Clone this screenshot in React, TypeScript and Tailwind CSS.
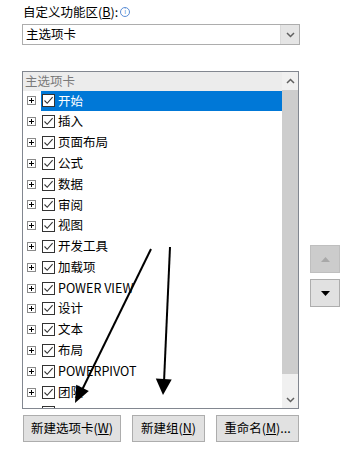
const tabs = [
  '开始',
  '插入',
  '页面布局',
  '公式',
  '数据',
  '审阅',
  '视图',
  '开发工具',
  '加载项',
  'POWER VIEW',
  '设计',
  '文本',
  '布局',
  'POWERPIVOT',
  '团队',
  ''
];

function PlusBox() {
  return (
    <div className="relative h-[9px] w-[9px] shrink-0 border border-[#8a8a8a] bg-white">
      <div className="absolute left-[1px] top-[3px] h-[1px] w-[5px] bg-black" />
      <div className="absolute left-[3px] top-[1px] h-[5px] w-[1px] bg-black" />
    </div>
  );
}

function CheckBox() {
  return (
    <div className="flex h-[13px] w-[13px] shrink-0 items-center justify-center border border-[#333333] bg-white">
      <svg width="11" height="11" viewBox="0 0 11 11">
        <path d="M1.5 5.5 L4.2 8.3 L9.6 2.2" fill="none" stroke="#333333" strokeWidth="1.1" />
      </svg>
    </div>
  );
}

function Chevron({ up }: { up?: boolean }) {
  return (
    <svg width="9" height="6" viewBox="0 0 9 6">
      <path
        d={up ? 'M1 5 L4.5 1.5 L8 5' : 'M1 1 L4.5 4.5 L8 1'}
        fill="none"
        stroke="#606060"
        strokeWidth="1.5"
      />
    </svg>
  );
}

export default function App() {
  return (
    <div
      className="relative h-[449px] w-[345px] overflow-hidden bg-white text-[12.5px] text-black"
      style={{ fontFamily: '"Noto Sans CJK SC", "Liberation Sans", sans-serif' }}
    >
      <div className="flex h-[24px] items-center pl-[23px] pt-[1px]">
        <span>
          自定义功能区(<span className="underline">B</span>):
        </span>
        <span className="ml-[2px] mb-[2px] flex h-[10px] w-[10px] items-center justify-center rounded-full border border-[#5b8ed6] text-[7px] leading-none text-[#5b8ed6]">
          i
        </span>
      </div>

      <div className="ml-[22px] flex h-[21px] w-[278px] border border-[#adadad] bg-white">
        <div className="flex flex-1 items-center pl-[3px]">主选项卡</div>
        <div className="flex w-[19px] items-center justify-center border-l border-[#dadada] bg-[#e5e5e5]">
          <Chevron />
        </div>
      </div>

      <div className="mt-[26px] flex">
        <div className="ml-[22px] flex h-[338px] w-[277px] border border-[#828790] bg-white">
          <div className="flex flex-1 flex-col overflow-hidden">
            <div className="flex h-[18.5px] shrink-0 items-center bg-[#ececec] pl-[2px] text-[#7a7a7a]">
              主选项卡
            </div>
            {tabs.map((t, i) => (
              <div key={i} className="flex h-[20.8px] shrink-0 items-center">
                <div className="ml-[4px] mr-[5px]">
                  <PlusBox />
                </div>
                <div
                  className={
                    i === 0
                      ? 'flex h-full flex-1 items-center bg-[#0078d7] pl-[1px] text-white'
                      : 'flex h-full flex-1 items-center pl-[1px]'
                  }
                >
                  <CheckBox />
                  {t && <span className="ml-[3px] whitespace-nowrap">{t}</span>}
                </div>
              </div>
            ))}
          </div>
          <div className="flex w-[16px] shrink-0 flex-col bg-[#f0f0f0]">
            <div className="flex h-[18px] items-center justify-center">
              <Chevron up />
            </div>
            <div className="h-[284px] bg-[#cdcdcd]" />
            <div className="flex flex-1 items-end justify-center pb-[5px]">
              <Chevron />
            </div>
          </div>
        </div>

        <div className="ml-[11px] flex flex-col gap-[6px] pt-[174px]">
          <div className="flex h-[28px] w-[30px] items-center justify-center border border-[#bfbfbf] bg-[#cccccc]">
            <svg width="9" height="5" viewBox="0 0 9 5">
              <path d="M0 5 L4.5 0 L9 5 Z" fill="#a8a8a8" />
            </svg>
          </div>
          <div className="flex h-[28px] w-[30px] items-center justify-center border border-[#adadad] bg-[#e1e1e1]">
            <svg width="9" height="5" viewBox="0 0 9 5">
              <path d="M0 0 L9 0 L4.5 5 Z" fill="#000000" />
            </svg>
          </div>
        </div>
      </div>

      <div className="mt-[6px] flex gap-[11px] pl-[23px]">
        <button className="flex h-[27px] w-[98px] items-center justify-center border border-[#adadad] bg-[#e1e1e1]">
          新建选项卡(<span className="underline">W</span>)
        </button>
        <button className="flex h-[27px] w-[73px] items-center justify-center border border-[#adadad] bg-[#e1e1e1]">
          新建组(<span className="underline">N</span>)
        </button>
        <button className="flex h-[27px] w-[83px] items-center justify-center border border-[#adadad] bg-[#e1e1e1]">
          重命名(<span className="underline">M</span>)...
        </button>
      </div>

      <svg className="pointer-events-none absolute left-0 top-0" width="345" height="449" viewBox="0 0 345 449">
        <line x1="151" y1="249" x2="82" y2="390" stroke="#000" strokeWidth="2" />
        <path d="M75 403 L88.8 390.9 L76.2 384.7 Z" fill="#000" />
        <line x1="170" y1="247" x2="164" y2="382" stroke="#000" strokeWidth="2" />
        <path d="M163 395 L171.7 379.4 L155.8 378.6 Z" fill="#000" />
      </svg>
    </div>
  );
}
